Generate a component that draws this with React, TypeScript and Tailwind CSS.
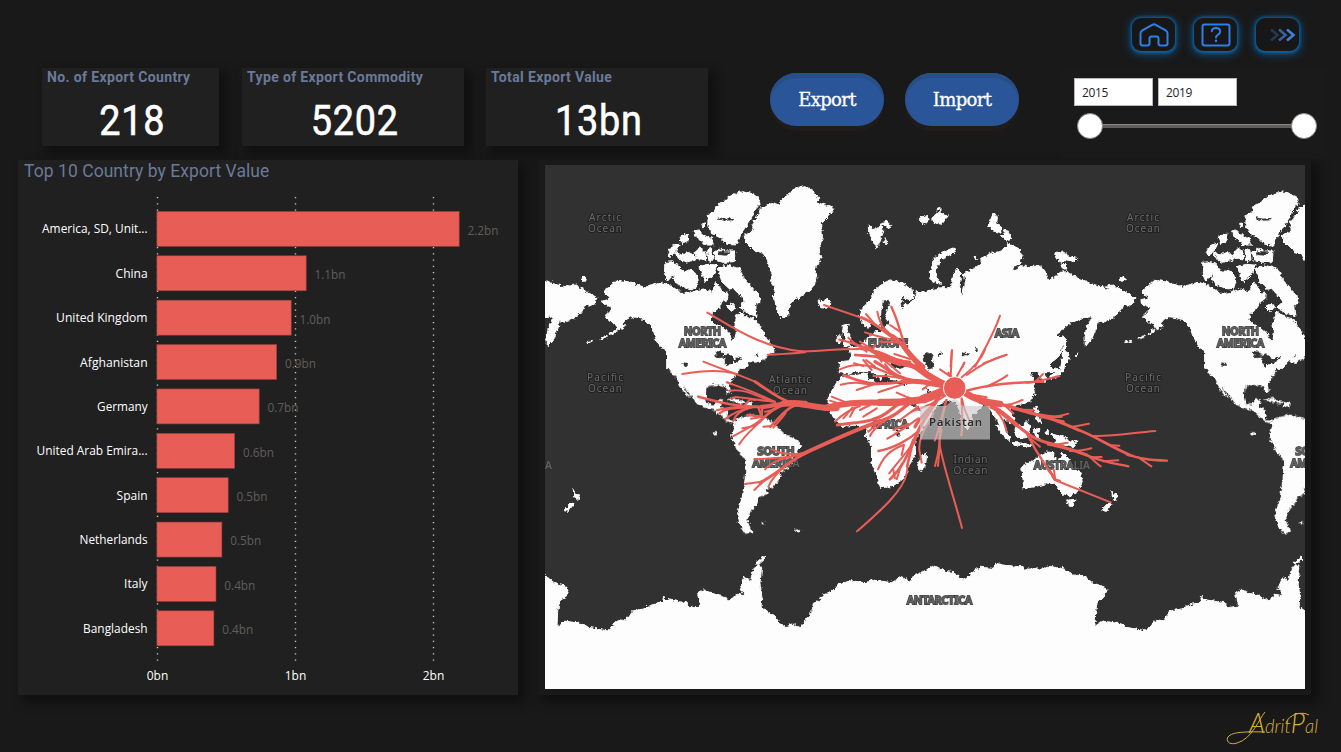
import React from "react";

const BARS = [
  { name: "America, SD, Unit...", tw: 105.5, w: 302, v: "2.2bn" },
  { name: "China", tw: 32, w: 149, v: "1.1bn" },
  { name: "United Kingdom", tw: 91.5, w: 134, v: "1.0bn" },
  { name: "Afghanistan", tw: 67.5, w: 119.5, v: "0.9bn" },
  { name: "Germany", tw: 50.5, w: 102, v: "0.7bn" },
  { name: "United Arab Emira...", tw: 111, w: 77.5, v: "0.6bn" },
  { name: "Spain", tw: 31, w: 71, v: "0.5bn" },
  { name: "Netherlands", tw: 68, w: 64.7, v: "0.5bn" },
  { name: "Italy", tw: 23.5, w: 58.8, v: "0.4bn" },
  { name: "Bangladesh", tw: 64.5, w: 56.7, v: "0.4bn" },
];

const AXIS = [
  { x: 139, t: "0bn" },
  { x: 277, t: "1bn" },
  { x: 415, t: "2bn" },
];

function BarChart() {
  return (
    <svg width="500" height="509" viewBox="0 0 500 509" className="block font-['Open_Sans','Noto_Sans',sans-serif] text-[12.4px]">
      {AXIS.map((a) => (
        <g key={a.t}>
          <line x1={a.x + 0.5} x2={a.x + 0.5} y1="11" y2="479" stroke="#c8c8c8" strokeWidth="1.4" strokeDasharray="1.2 5.05" />
          <text x={a.x + 0.5} y="494" textAnchor="middle" fill="#fff" textLength="21.5" lengthAdjust="spacingAndGlyphs">{a.t}</text>
        </g>
      ))}
      {BARS.map((b, i) => {
        const y = 25.4 + i * 44.38;
        return (
          <g key={b.name}>
            <rect x="138.9" y={y} width={b.w + 0.3} height="35" fill="#e85d56" stroke="#8f3f3c" strokeWidth="0.6" />
            <text x="129.6" y={y + 22} textAnchor="end" fill="#fff" textLength={b.tw} lengthAdjust="spacingAndGlyphs">{b.name}</text>
            <text x={139 + b.w + 8.5} y={y + 23.4} fill="#605e5c" textLength="31" lengthAdjust="spacingAndGlyphs">{b.v}</text>
          </g>
        );
      })}
    </svg>
  );
}

const T4 = "translate(0 0) scale(0.33333)";
const T5 = "translate(255 0) scale(0.33333)";
const T7 = "translate(0 185) scale(0.33333)";
const T8 = "translate(255 185) scale(0.33333)";
const T9 = "translate(505 185) scale(0.33333)";
const T10 = "translate(0 375) scale(0.33333)";

const LAND: [string, string[]][] = [
  [T4, [
    "178,378 190,368 215,346 260,352 300,368 310,362 345,352 375,360 400,378 440,382 475,372 500,382 512,350 528,372 534,400 525,425 502,445 498,465 510,478 535,490 552,505 562,530 570,520 574,500 570,480 574,455 585,440 605,455 630,462 655,500 665,522 680,538 687,560 660,570 640,565 625,575 655,580 640,592 615,590 600,610 365,610 365,555 350,548 332,520 320,485 300,465 280,458 258,455 240,466 228,485 218,492 210,475 192,468 180,455 200,435 198,425 180,420 172,408 192,402 198,392 180,388",
    "590,80 612,84 640,95 645,118 625,140 620,160 602,185 582,215 572,240 545,238 520,212 500,205 488,182 490,148 508,140 512,125 540,108 552,95",
    "508,260 530,250 545,258 570,258 568,290 535,292 512,286",
    "360,292 385,290 405,305 400,325 380,335 368,348 358,325",
    "402,315 420,322 440,312 452,330 460,345 452,370 430,372 395,355 385,342",
    "370,262 385,240 405,235 395,255 375,275",
    "392,262 410,270 430,262 450,272 452,285 420,292 400,280",
    "405,220 420,208 432,208 428,232 412,236",
    "446,198 460,195 478,212 500,220 505,240 480,240 468,225 450,212",
    "450,262 465,248 480,262 482,285 455,280",
    "462,305 490,298 516,300 505,330 480,350 470,325",
    "486,255 500,250 504,285 492,290",
    "520,310 545,300 582,310 600,345 625,375 642,390 645,412 632,420 636,455 610,445 580,428 600,410 585,390 560,378 530,350",
    "530,385 550,380 548,402 532,410",
    "545,425 565,415 575,430 560,440",
    "648,130 680,112 700,118 722,92 740,82 752,68 780,62 805,80 822,102 812,112 845,122 867,130 850,155 830,175 832,220 822,250 828,280 812,310 816,340 808,360 795,375 765,395 745,405 732,422 728,452 708,458 698,440 688,400 690,370 676,350 682,330 668,290 655,265 630,258 600,228 598,210 628,195 620,175 640,150",
    "470,175 480,174 482,184 472,185",
    "108,342 118,335 128,342 118,349",
    "215,485 235,475 240,482 222,495",
    "195,505 215,493 216,498 196,509",
    "165,520 185,510 187,514 166,524",
    "125,531 145,526 146,529 126,533",
  ]],
  [T7, [
    "365,-15 620,-15 610,20 590,40 575,70 560,90 553,103 556,128 548,130 545,108 520,103 495,106 483,115 481,140 486,162 508,165 518,150 532,148 526,172 548,182 545,208 562,214 582,205 620,195 650,202 672,210 690,228 705,240 725,258 758,270 767,288 745,315 735,350 708,367 700,390 682,412 660,415 667,430 640,442 636,460 616,482 606,510 622,546 602,550 585,525 578,490 592,440 600,390 605,330 585,312 565,275 560,255 567,235 570,220 548,214 525,195 505,178 480,173 455,160 445,142 430,125 412,100 385,75 368,50",
    "398,88 412,100 422,125 436,142 425,135 408,112",
    "545,150 570,145 598,158 590,162 565,152",
    "602,158 622,160 618,168 602,167",
    "640,8 670,12 660,28 638,26",
    "502,248 515,248 514,255 504,254",
    "748,538 765,542 762,550",
    "650,517 657,516 656,523",
  ]],
  [T5, [
    "215,400 225,375 250,355 270,345 300,350 335,372 343,392 332,405 310,398 300,402 322,420 345,402 348,380 362,385 390,375 425,368 455,368 456,340 470,308 482,325 478,378 488,390 498,345 490,325 520,312 545,295 542,280 575,265 605,258 622,235 655,250 667,275 655,300 680,305 722,303 735,318 742,345 765,338 780,322 800,320 830,338 850,345 870,355 905,365 940,360 965,375 1005,398 995,420 968,420 960,440 935,460 910,472 892,468 888,490 876,520 856,545 855,510 860,485 878,455 850,458 810,475 790,490 768,508 788,520 785,555 770,580 745,600 780,620 330,620 150,620 158,590 150,560 145,548 185,540 205,515 225,500 250,500 240,485 215,470 205,490 190,478 178,455 182,435",
    "130,480 145,478 140,495 152,520 148,542 128,545 138,520 128,500",
    "112,515 125,510 124,528 112,530",
    "462,248 468,258 440,275 420,285 410,310 408,335 425,358 410,355 390,342 388,320 400,300 402,280 425,262",
    "205,180 228,195 240,180 252,195 240,222 230,248 218,225 206,205",
    "240,175 262,168 275,182 265,192",
    "255,218 263,236 252,232",
    "358,160 378,152 388,165 375,178 362,170",
    "398,155 420,140 432,150 445,152 425,178 400,172",
    "412,130 420,127 420,140",
    "565,180 580,145 592,155 590,175 608,190 600,203 580,198",
    "605,215 618,192 638,222 622,226",
    "53,408 68,410 85,402 92,415 80,430 62,428",
    "764,268 785,260 805,272 832,280 825,290 800,285 780,292",
    "783,300 798,298 800,312 788,312",
    "788,512 800,525 798,560 808,580 795,600 786,570 790,545",
    "522,275 530,272 528,285",
    "958,340 968,335 975,342 964,349",
  ]],
  [T8, [
    "118,35 150,32 155,-10 780,-10 760,30 738,55 728,62 740,80 735,98 722,80 712,62 690,68 704,92 700,120 705,130 690,152 665,162 645,165 628,178 645,205 630,218 612,205 602,208 618,235 618,252 605,240 592,210 580,195 570,170 556,162 540,175 515,195 512,222 500,240 488,215 478,180 468,160 450,150 432,152 400,182 368,196 358,175 330,140 312,112 326,95 270,88 255,68 245,92 232,80 220,62 200,42 175,48 172,60 150,72 118,68",
    "130,76 170,76 200,70 206,88 240,104 270,98 312,108 328,142 356,188 400,188 392,205 370,232 350,262 346,292 346,315 328,345 322,368 308,388 275,410 242,413 226,372 215,335 214,290 196,255 205,240 195,226 160,226 120,230 100,202 84,168 85,140 110,98",
    "378,308 380,325 370,358 358,364 353,345 362,322",
    "588,222 605,235 630,262 628,272 610,258",
    "635,277 670,280 702,286 690,290 640,284",
    "645,235 668,225 682,215 690,230 682,262 660,266 648,255",
    "700,235 722,238 712,250 720,268 708,262",
    "700,175 712,172 718,200 724,218 710,212",
    "738,245 745,240 745,255",
    "750,250 800,265 830,282 815,290 780,285",
    "665,348 700,332 722,315 740,306 762,308 760,322 778,332 788,305 798,315 815,345 842,370 847,398 832,425 808,440 785,428 772,415 765,400 742,400 715,408 672,416 668,380",
  ]],
  [T9, [
    "42,-5 52,5 58,18 45,30 42,60 25,78 0,88 0,78 30,60 36,30",
    "52,450 75,448 70,466 58,466",
    "183,418 190,430 203,438 195,452 188,440",
    "180,456 186,460 170,484 155,482",
    "74,18 84,12 82,20",
    "12,258 40,262 68,285 52,285 20,280",
    "74,272 88,270 84,278",
  ]],
  [T10, [
    "37,258 60,243 115,252 130,262 190,273 197,262 213,250 218,238 240,243 262,213 295,207 320,195 352,187 355,172 370,180 425,188 435,203 467,198 458,160 475,150 490,155 500,160 530,167 555,182 575,162 600,168 585,145 600,110 615,125 628,85 640,72 650,82 645,130 651,170 648,200 690,230 705,250 722,260 740,252 765,262 785,235 800,218 805,190 825,182 830,168 865,150 880,132 920,122 960,128 985,120 1040,128 1070,110 1095,125 1110,105 1145,90 1162,76 1175,80 1200,94 1230,98 1253,122 1275,103 1305,82 1345,85 1354,70 1405,82 1425,76 1440,87 1495,87 1505,78 1560,87 1585,105 1615,107 1645,130 1672,138 1686,152 1675,172 1658,182 1652,215 1650,258 1700,262 1700,600 37,600",
    "633,68 655,50 660,54 640,72",
  ]],
];

const WATER: [string, string[]][] = [
  [T4, ["520,158 540,162 565,160 560,165 540,166 522,162", "520,260 555,260 545,271 522,269", "548,378 565,372 590,400 575,410 560,395", "512,570 535,564 532,577 515,579", "540,585 560,574 565,590 545,605", "62,364 75,368 68,373", "405,378 430,372 440,380 410,383"]],
  [T7, ["510,4 535,7 530,15 512,11", "533,22 548,10 562,22 552,44 538,42 545,28", "562,32 590,18 585,28 570,38", "413,41 428,43 420,50"]],
  [T5, ["250,408 268,405 262,430 255,455 266,472 250,492 242,480 245,440", "640,305 662,300 660,305 642,312", "300,415 312,412 308,428"]],
  [T8, ["368,18 385,8 400,15 392,28 402,52 385,58 372,35", "272,40 300,36 318,46 300,56 275,52", "488,8 510,12 505,16 488,14", "415,15 422,5 425,12", "525,-6 535,-2 530,6", "326,150 340,150 345,170 335,165", "288,240 300,240 298,256 290,255", "378,118 395,130 420,140 400,146 384,132"]],
];

function World() {
  return (
    <g id="world">
      {LAND.map(([t, ps], i) => (
        <g key={i} transform={t} fill="#fdfdfd" stroke="#fdfdfd" strokeWidth="3" strokeLinejoin="round">
          {ps.map((p, j) => <polygon key={j} points={p} />)}
        </g>
      ))}
      {WATER.map(([t, ps], i) => (
        <g key={i} transform={t} fill="#313131" stroke="#313131" strokeWidth="2">
          {ps.map((p, j) => <polygon key={j} points={p} />)}
        </g>
      ))}
    </g>
  );
}

const FLOWS: [string, [number, string][]][] = [
  [T4, [[6, "M487 443C560 485 650 550 780 560"], [6, "M668 569C700 568 740 565 780 562"]]],
  [T7, [
    [19, "M780 162C750 160 730 158 715 161"],
    [13, "M725 161C700 160 680 170 650 171"],
    [6, "M475 35C550 65 600 80 640 100"],
    [9, "M630 95C670 120 700 148 740 158"],
    [6, "M412 72C480 60 530 58 575 72"],
    [6, "M545 97C590 112 640 130 690 156"],
    [6, "M552 122C590 115 620 130 680 155"],
    [6, "M548 97L562 103"],
    [8, "M460 140C520 156 580 172 650 171"],
    [6, "M560 145L572 141C600 142 625 150 690 155"],
    [6, "M515 181C545 172 600 168 650 170"],
    [7, "M523 190C545 172 570 176 640 170"],
    [6, "M540 208C560 190 590 178 625 170"],
    [6, "M565 213C570 195 585 182 620 172"],
    [6, "M600 165L615 148L630 150"],
    [6, "M565 258C600 240 630 225 655 205"],
    [9, "M640 218C670 190 690 170 725 162"],
    [6, "M583 283C600 255 620 240 645 215"],
    [6, "M592 235C610 232 625 230 635 224"],
    [7, "M607 195L650 200L640 172"],
    [6, "M618 206L655 200"],
    [7, "M650 202L652 170"],
    [6, "M655 230L680 228"],
    [8, "M676 230C700 210 715 180 750 166"],
    [6, "M685 233C700 215 715 200 722 188"],
    [6, "M660 185C680 185 700 170 715 165"],
    [6, "M680 298C705 310 735 318 780 308"],
    [6, "M628 328C670 325 720 325 760 315"],
    [6, "M660 358C680 335 710 325 740 320"],
    [6, "M600 402L650 395"],
    [9, "M645 398C700 370 735 330 785 308"],
    [6, "M628 420L665 385"],
    [6, "M670 410C680 385 700 365 725 342"],
  ]],
  [T5, [
    [6, "M0 560C60 558 110 552 180 552"],
    [7, "M170 552C230 550 260 570 300 590"],
    [6, "M72 420L190 460"],
    [9, "M185 458C230 475 250 500 290 525"],
    [13, "M280 515C320 545 325 570 370 605"],
    [6, "M198 447L222 475"],
    [6, "M232 440C240 480 250 495 290 520"],
    [7, "M274 425C300 480 300 510 320 550"],
    [6, "M270 480L300 500"],
    [6, "M195 502C230 515 270 520 310 535"],
    [6, "M240 530L310 533"],
    [7, "M118 524C150 530 180 545 215 552"],
    [6, "M145 518C160 535 180 545 200 560"],
    [6, "M180 530L215 552L245 590"],
    [8, "M200 550L260 585L300 600"],
    [6, "M225 540L215 560"],
    [7, "M165 570L225 575C260 580 280 590 330 590"],
    [6, "M283 567L330 582"],
    [6, "M600 452C580 510 550 560 525 605"],
    [6, "M620 569L550 595"],
    [6, "M455 560L452 605"],
    [6, "M493 593L488 605"],
  ]],
  [T8, [
    [18, "M-15 160C30 165 70 178 110 174"],
    [18, "M75 174C130 160 170 156 250 158"],
    [22, "M240 157C300 158 350 155 380 145"],
    [26, "M370 147C400 138 410 130 440 122"],
    [15, "M300 35C350 45 390 80 430 100"],
    [18, "M350 52C380 75 400 90 435 102"],
    [13, "M310 -10C330 20 350 40 380 70"],
    [9, "M200 -5C240 10 280 30 330 38"],
    [12, "M245 20C270 35 310 42 350 52"],
    [6, "M165 14L220 18C250 25 270 45 300 70"],
    [10, "M225 35C270 60 290 85 340 92"],
    [15, "M320 95C360 90 390 100 430 108"],
    [6, "M120 58C150 45 190 40 230 55"],
    [6, "M162 40L190 48"],
    [6, "M190 30L215 60"],
    [6, "M198 30L225 50"],
    [7, "M215 48C240 60 270 75 310 82"],
    [6, "M255 42L270 62"],
    [6, "M220 78C250 78 280 75 320 90"],
    [8, "M130 76C180 95 220 110 310 95"],
    [6, "M122 104C160 95 180 98 215 105"],
    [6, "M170 120L215 105C250 100 290 100 320 92"],
    [6, "M235 127C260 118 290 110 320 97"],
    [6, "M290 128C310 138 330 145 350 150"],
    [6, "M368 118L385 105L420 108"],
    [6, "M95 140L140 158L110 160"],
    [6, "M90 152L130 165"],
    [6, "M130 205L158 172"],
    [6, "M150 200L165 172"],
    [6, "M105 215C130 190 150 178 180 168"],
    [9, "M112 225C150 218 190 220 230 205"],
    [10, "M220 208C265 195 270 175 300 160"],
    [6, "M190 200L230 175"],
    [6, "M180 180L210 165"],
    [12, "M-5 318C80 280 160 240 240 214"],
    [10, "M225 218C290 200 300 180 335 155"],
    [6, "M210 258C220 235 240 225 260 208"],
    [6, "M205 245L225 228"],
    [6, "M300 210L355 170"],
    [6, "M262 266C290 250 320 230 355 205"],
    [6, "M280 240L325 222"],
    [10, "M345 230C360 200 390 180 410 150"],
    [7, "M235 303C280 295 325 270 350 248"],
    [6, "M234 358C250 320 270 300 310 285"],
    [6, "M305 315L312 285"],
    [6, "M268 370C290 340 310 320 335 285"],
    [8, "M270 388C310 350 325 310 340 270"],
    [6, "M285 385L280 360"],
    [6, "M290 388L302 350"],
    [6, "M320 350L330 310"],
    [6, "M171 544C250 475 310 420 320 370C325 330 330 300 350 250"],
    [10, "M340 280C355 230 380 200 415 145"],
    [6, "M365 338L358 300C355 260 380 230 400 190"],
    [6, "M405 348L412 320C420 290 415 270 425 240"],
    [6, "M414 348L418 300"],
    [6, "M404 272C415 250 425 200 438 150"],
    [6, "M486 534C470 470 430 350 420 290C415 240 430 190 440 150"],
    [6, "M335 185C380 170 410 155 440 135"],
    [7, "M484 256C490 210 485 180 485 145"],
    [6, "M512 218C500 195 490 175 487 150"],
    [6, "M420 58L452 80L456 0"],
    [6, "M445 68L455 82"],
    [6, "M493 38L470 80"],
    [6, "M555 0C545 25 525 50 485 82"],
    [6, "M620 14C580 25 540 45 500 75"],
    [7, "M500 122C560 105 640 98 700 96"],
    [6, "M680 98C720 95 745 85 778 78"],
    [6, "M622 76C600 92 580 100 560 110"],
    [6, "M729 72L705 96"],
    [6, "M730 96L710 96"],
    [20, "M495 128C520 145 550 158 600 162"],
    [6, "M560 142L520 135"],
    [11, "M590 162C630 165 650 180 700 190"],
    [7, "M700 190C730 195 750 202 785 200"],
    [9, "M690 188C730 203 750 208 790 215"],
    [6, "M668 150C650 155 640 165 615 165"],
    [6, "M700 180C680 178 660 180 640 178"],
    [6, "M640 190L620 172"],
    [13, "M540 155C590 170 620 200 650 225"],
    [9, "M640 218C690 255 700 275 790 288"],
    [6, "M620 246C615 220 605 200 590 185"],
    [6, "M720 290L690 265"],
    [7, "M680 250C700 290 730 340 765 385"],
    [6, "M763 388L780 392"],
    [6, "M745 362L765 385L762 360"],
  ]],
  [T9, [
    [9, "M-5 203C30 215 60 230 85 240"],
    [6, "M-5 203C20 200 40 196 55 191"],
    [8, "M80 238C130 255 180 290 240 315"],
    [6, "M60 231C80 230 95 225 117 221"],
    [6, "M130 258C190 260 250 248 316 243"],
    [6, "M185 286L208 287"],
    [7, "M230 313C270 325 290 330 351 332"],
    [6, "M265 322L304 349"],
    [6, "M235 316L250 317"],
    [9, "M-5 283C40 290 70 300 110 315"],
    [6, "M0 282C20 285 35 280 53 278"],
    [6, "M60 303C85 305 105 300 124 295"],
    [7, "M105 313C150 335 190 340 235 349"],
    [6, "M120 322L155 321"],
    [6, "M115 318C130 328 138 340 152 349"],
    [6, "M160 334L205 331"],
    [6, "M5 370C8 385 15 392 22 393L182 457"],
    [6, "M0 362L8 380"],
  ]],
];

function Sea({ x, y, a, w, w2 }: { x: number; y: number; a: string; w: number; w2: number }) {
  return (
    <g fontSize="10" fill="#6a6a6a" stroke="#202020" strokeWidth="2" paintOrder="stroke" textAnchor="middle">
      <text x={x} y={y} textLength={w}>{a}</text>
      <text x={x} y={y + 10.8} textLength={w2}>Ocean</text>
    </g>
  );
}

function Land({ x, y, lines, w }: { x: number; y: number; lines: string[]; w: number[] }) {
  return (
    <g fontSize="11" fontWeight="600" fill="#626262" stroke="#2e2e2e" strokeOpacity="0.85" strokeWidth="1.8" paintOrder="stroke" textAnchor="middle">
      {lines.map((l, i) => (
        <text key={l} x={x} y={y + i * 12} textLength={w[i]} lengthAdjust="spacingAndGlyphs">{l}</text>
      ))}
    </g>
  );
}

function FlowMap() {
  return (
    <svg width="760" height="524" viewBox="0 0 760 524" className="block bg-[#313131] font-['Noto_Sans','Open_Sans',sans-serif]">
      <defs>
        <filter id="coast" x="0" y="0" width="760" height="524" filterUnits="userSpaceOnUse">
          <feTurbulence type="fractalNoise" baseFrequency="0.3" numOctaves="2" seed="4" />
          <feDisplacementMap in="SourceGraphic" scale="5" xChannelSelector="R" yChannelSelector="G" />
        </filter>
      </defs>
      <g filter="url(#coast)">
        <World />
        <use href="#world" x="538" />
        <use href="#world" x="-538" />
        <rect x="-10" y="480" width="780" height="60" fill="#fdfdfd" />
      </g>
      <rect y="500" width="760" height="24" fill="#fdfdfd" />
      <rect y="460" width="4" height="64" fill="#fdfdfd" />
      <Sea x={60} y={55.8} a="Arctic" w={32} w2={34} />
      <Sea x={598} y={55.8} a="Arctic" w={32} w2={34} />
      <Sea x={60} y={215.8} a="Pacific" w={36} w2={34} />
      <Sea x={598} y={215.8} a="Pacific" w={36} w2={34} />
      <Sea x={245} y={217.8} a="Atlantic" w={42} w2={34} />
      <Sea x={425.5} y={297.8} a="Indian" w={34} w2={34} />
      <Land x={157.5} y={170} lines={["NORTH", "AMERICA"]} w={[37, 47]} />
      <Land x={695.5} y={170} lines={["NORTH", "AMERICA"]} w={[37, 47]} />
      <Land x={231} y={289.5} lines={["SOUTH", "AMERICA"]} w={[37, 47]} />
      <Land x={769} y={289.5} lines={["SOUTH", "AMERICA"]} w={[37, 47]} />
      <Land x={462} y={172} lines={["ASIA"]} w={[24]} />
      <Land x={343} y={182} lines={["EUROPE"]} w={[40]} />
      <Land x={345} y={262.5} lines={["AFRICA"]} w={[36]} />
      <Land x={517} y={304} lines={["AUSTRALIA"]} w={[56]} />
      <Land x={-21} y={304} lines={["AUSTRALIA"]} w={[56]} />
      <Land x={394.5} y={439} lines={["ANTARCTICA"]} w={[65]} />
      {FLOWS.map(([t, ps], i) => (
        <g key={i} transform={t} fill="none" stroke="#e85d56" strokeLinecap="round" strokeLinejoin="round">
          {ps.map(([w, d], j) => <path key={j} d={d} strokeWidth={w} />)}
        </g>
      ))}
      <path d="M375 241H401L409.5 233L418 241H445V274.500H375Z" fill="#cccccc" fillOpacity="0.65" />
      <text x="410.500" y="261" textAnchor="middle" fontSize="11.5" fontWeight="600" fill="#2b2b2b" stroke="#d0d0d0" strokeOpacity="0.5" strokeWidth="1" paintOrder="stroke" textLength="53">Pakistan</text>
      <circle cx="409.700" cy="223" r="11.300" fill="#e85d56" stroke="#fff" strokeWidth="1" />
    </svg>
  );
}

function NavButton({ children }: { children: React.ReactNode }) {
  return (
    <div className="flex h-[33px] w-[43px] items-center justify-center rounded-[9px] bg-[#171717] shadow-[0_0.5px_3px_1px_#0a66ad,0_2px_8px_2px_rgba(10,95,165,0.65)]">
      {children}
    </div>
  );
}

function Card({ title, value, className }: { title: string; value: string; className: string }) {
  return (
    <div className={`h-[78px] shrink-0 bg-[#202020] shadow-[6px_6px_10px_2px_rgba(0,0,0,0.38)] ${className}`}>
      <div className="pl-[5px] text-[14px] leading-[19px] font-bold tracking-[0.36px] whitespace-nowrap text-[#6b7a99]">{title}</div>
      <div className="mt-[10px] scale-x-[0.9] pl-[4px] text-center text-[42px] leading-[48px] font-normal tracking-[0.8px] text-white [-webkit-text-stroke:0.6px_white]">{value}</div>
    </div>
  );
}

function Pill({ label }: { label: string }) {
  return (
    <div className="flex h-[53px] w-[114px] items-center justify-center rounded-full bg-[#2a5699] font-['DejaVu_Serif',serif] text-[18px] tracking-[-0.65px] text-white shadow-[0_5px_0_#211c1c,inset_0_5px_0_#264f86] [-webkit-text-stroke:0.3px_white]">
      {label}
    </div>
  );
}

export default function App() {
  return (
    <div className="flex h-[752px] w-[1341px] flex-col overflow-hidden bg-[#191919] font-[Roboto,sans-serif]">
      <div className="flex h-[68px] shrink-0 justify-end gap-[19px] pt-[18px] pr-[42px]">
        <NavButton>
          <svg width="30" height="24" viewBox="0 0 30 24" fill="none" stroke="#2f7fe8" strokeWidth="2" strokeLinejoin="round">
            <path d="M1.500 10.500Q1.500 8.500 3.300 7.400L13.300 1.800Q15 .9 16.700 1.800L26.700 7.400Q28.500 8.500 28.500 10.500V20.500Q28.500 22.500 26.500 22.500H21.500Q19.500 22.500 19.500 20.500V15.500Q19.500 13.500 17.500 13.500H12.500Q10.500 13.500 10.500 15.500V20.500Q10.500 22.500 8.500 22.500H3.500Q1.500 22.500 1.500 20.500Z" />
          </svg>
        </NavButton>
        <NavButton>
          <svg width="30" height="24" viewBox="0 0 30 24" fill="none" stroke="#2f7fe8" strokeWidth="2" strokeLinecap="round">
            <rect x="1.500" y="1.500" width="27" height="21" rx="2" />
            <path d="M10.800 8.200Q11 5 15 5T19.200 8.400Q19.200 10.300 17 11.600Q15 12.800 15 14.600" />
            <path d="M15 17.800V18" strokeWidth="2.400" />
          </svg>
        </NavButton>
        <NavButton>
          <svg width="36" height="14" viewBox="0 0 36 14" fill="none" strokeWidth="2.600" className="translate-x-[2px]">
            <path d="M9 1.500L15.500 7L9 12.500" stroke="#25384f" />
            <path d="M17 1.500L23.500 7L17 12.500" stroke="#3a5f9a" />
            <path d="M25 1.500L31.500 7L25 12.500" stroke="#3f82dc" />
          </svg>
        </NavButton>
      </div>

      <div className="flex h-[92px] shrink-0 items-start pl-[42px]">
        <Card title="No. of Export Country" value="218" className="w-[177px]" />
        <Card title="Type of Export Commodity" value="5202" className="ml-[23px] w-[222px]" />
        <Card title="Total Export Value" value="13bn" className="ml-[22px] w-[222px]" />
        <div className="mt-[5px] ml-[62px] flex gap-[21px]">
          <Pill label="Export" />
          <Pill label="Import" />
        </div>
        <div className="ml-[42px] flex h-[91px] w-[265px] flex-col bg-[#1a1a1a] pt-[10px] pl-[13px] font-['Open_Sans',sans-serif] text-[12px] text-[#252423]">
          <div className="flex gap-[5px]">
            <div className="flex h-[28px] w-[79px] items-center border border-[#b8b8b8] bg-white pt-px pl-[7px] tracking-[-0.35px]">2015</div>
            <div className="flex h-[28px] w-[79px] items-center border border-[#b8b8b8] bg-white pt-px pl-[7px] tracking-[-0.35px]">2019</div>
          </div>
          <div className="mt-[7px] ml-[3px] flex items-center">
            <div className="size-[26px] shrink-0 rounded-full border border-[#8a8886] bg-white" />
            <div className="h-[4px] w-[188px] border-t border-[#8a8886] bg-[#605e5c]" />
            <div className="size-[26px] shrink-0 rounded-full border border-[#8a8886] bg-white" />
          </div>
        </div>
      </div>

      <div className="flex h-[536px] shrink-0 items-start pl-[18px]">
        <div className="h-[535px] w-[500px] bg-[#202020] shadow-[6px_6px_10px_2px_rgba(0,0,0,0.38)]">
          <div className="h-[26px] pt-px pl-[6px] text-[17.5px] leading-[21px] tracking-[0.06px] whitespace-nowrap text-[#6b7a99]">Top 10 Country by Export Value</div>
          <BarChart />
        </div>
        <div className="ml-[20px] h-[535px] w-[773px] bg-[#191919] pt-[5px] pl-[7px] shadow-[6px_6px_10px_2px_rgba(0,0,0,0.38)]">
          <FlowMap />
        </div>
      </div>

      <div className="flex h-[56px] justify-end pr-[18px]">
        <svg width="100" height="44" viewBox="0 0 100 44" className="mt-[10px] font-[Lato,sans-serif]" fill="#d4af37">
          <path d="M42 6C36 13 29 33 14 37C8 39 3 36.500 4.500 32C7 26 20 25.500 42 26" fill="none" stroke="#d4af37" strokeWidth="1" />
          <text x="26" y="27" fontSize="19" fontStyle="italic" fontWeight="300" textLength="69" lengthAdjust="spacingAndGlyphs">
            <tspan fontSize="27">A</tspan>drit<tspan fontSize="27">P</tspan>al
          </text>
          <path d="M63 17C66 8 79 5 86 9" fill="none" stroke="#d4af37" strokeWidth="1" />
        </svg>
      </div>
    </div>
  );
}
